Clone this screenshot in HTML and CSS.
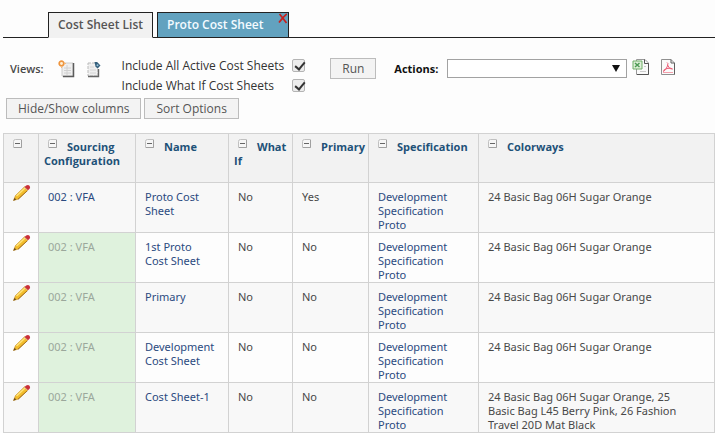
FILE: index.html
```html
<!DOCTYPE html>
<html lang="en">
<head>
<meta charset="utf-8">
<title>Cost Sheet List</title>
<link rel="stylesheet" href="styles.css">
</head>
<body>
<svg class="defs" aria-hidden="true">
  <symbol id="minus" viewBox="0 0 11 11">
    <path d="M1.500 3.500Q1.500 1.500 3.500 1.500H9.500V9.500H1.500Z" fill="#f6f6f6" stroke="#c0c0c0"/>
    <path d="M9.500 2V9.500H2" fill="none" stroke="#a0a0a0"/>
    <path d="M3 5.500H8" stroke="#666"/>
  </symbol>
  <symbol id="pencil" viewBox="0 0 19 18">
    <path d="M1.500 16.500L3.500 11.500 12.500 2.800 16 6.200 6.500 15Z" fill="#f2bd2c" stroke="#c08a28" stroke-width=".6"/>
    <path d="M4.500 12L13 4" stroke="#ffe47a" stroke-width="1.300"/>
    <path d="M6 15.200L15.500 6.500" stroke="#a8711f" stroke-width="1"/>
    <path d="M1.300 16.700L2.600 13.800 4.200 15.500Z" fill="#6d4a1c"/>
    <path d="M12.500 3L14.200 1.500Q16 .400 17.500 1.700Q18.700 3.200 17.600 4.700L16 6.300Z" fill="#c9303a"/>
    <path d="M12.300 3.200L15.800 6.600" stroke="#dfb890" stroke-width="1"/>
  </symbol>
</svg>

<nav class="tabs">
  <a class="tab active" href="#list">Cost Sheet List</a>
  <div class="tab other">
    <a href="#proto">Proto Cost Sheet</a>
    <button class="close" type="button" aria-label="Close tab">
      <svg width="10" height="11" viewBox="0 0 10 11"><path d="M1.500 1Q4.500 4.500 8.500 10M8.800 .800Q5 4 1 9.500" fill="none" stroke="#c8201c" stroke-width="1.700"/></svg>
    </button>
  </div>
</nav>

<form class="toolbar">
  <div class="views">
    <span>Views:</span>
    <button class="icon" type="button" aria-label="New view">
      <svg width="18" height="18" viewBox="0 0 18 18">
        <path d="M4 3H15V16H4Z" fill="#efefef" stroke="#ccc"/>
        <path d="M15.500 3V16.500H5" fill="none" stroke="#5c5c5c" stroke-width="1.500"/>
        <path d="M6 8H13M6 10.500H13M6 13H13M9 5V15" stroke="#d0d0d0"/>
        <circle cx="3.500" cy="3.500" r="2.300" fill="#fff1d8" stroke="#ef953e" stroke-width="1.700"/>
        <path d="M6 3.500H8M3.500 6V8" stroke="#f4b878"/>
      </svg>
    </button>
    <button class="icon" type="button" aria-label="Edit view">
      <svg width="16" height="18" viewBox="0 0 16 18">
        <path d="M2 3H12V16H2Z" fill="#efefef" stroke="#bbb" stroke-dasharray="3 1"/>
        <path d="M12.500 9V16.500H2" fill="none" stroke="#666" stroke-width="1.400"/>
        <path d="M4 7H8M4 10H10M4 13H10" stroke="#d4d4d4"/>
        <path d="M8.500 2L11 2 14.500 5.500 11.500 8.500 9.500 6.500Z" fill="#335f7c"/>
        <circle cx="11.500" cy="5.200" r="1" fill="#9cc3d8"/>
      </svg>
    </button>
  </div>
  <div class="checks">
    <label for="active">Include All Active Cost Sheets</label>
    <input id="active" type="checkbox" checked>
    <label for="whatif">Include What If Cost Sheets</label>
    <input id="whatif" type="checkbox" checked>
  </div>
  <button class="btn run" type="button">Run</button>
  <label class="actions-label" for="actions">Actions:</label>
  <div class="select">
    <select id="actions"><option></option></select>
    <svg width="8" height="7" viewBox="0 0 8 7" aria-hidden="true"><path d="M0 0H8L4 7Z" fill="#111"/></svg>
  </div>
  <div class="exports">
    <button class="icon" type="button" aria-label="Export to Excel">
      <svg width="18" height="18" viewBox="0 0 18 18">
        <path d="M4.500 1.500H13L16.500 5V16.500H4.500Z" fill="#fafafa" stroke="#999"/>
        <path d="M12.500 1.500V5.500H16.500V16.500H5" fill="none" stroke="#555"/>
        <path d="M1 3H10V11H1Z" fill="#dff0d8" stroke="#6fae68"/>
        <path d="M3 5L7.500 9M7.500 5L3 9" stroke="#4c9a54" stroke-width="1.500"/>
        <path d="M8 13.500H14M12 8.500H14" stroke="#ccc"/>
      </svg>
    </button>
    <button class="icon" type="button" aria-label="Export to PDF">
      <svg width="16" height="18" viewBox="0 0 16 18">
        <path d="M1.500 1.500H11L14.500 5V16.500H1.500Z" fill="#fbfbfb" stroke="#909090"/>
        <path d="M11 1.500V5H14.500V16.500" fill="none" stroke="#5e5e5e"/>
        <path d="M7 4.500Q8.500 4.500 7.500 8Q6 12 3.500 13.500Q3 11.500 7 10.500Q11 9.500 12.500 11Q9.500 12 7.500 7" fill="none" stroke="#ed5f78" stroke-width="1"/>
        <path d="M3 14.500H13" stroke="#f3a0ac"/>
      </svg>
    </button>
  </div>
</form>

<div class="options">
  <button class="btn" type="button">Hide/Show columns</button>
  <button class="btn" type="button">Sort Options</button>
</div>

<table class="sheets">
  <colgroup>
    <col class="c-edit"><col class="c-source"><col class="c-name"><col class="c-whatif"><col class="c-primary"><col class="c-spec"><col>
  </colgroup>
  <thead>
    <tr>
      <th><svg class="minus" role="img" aria-label="Collapse"><use href="#minus"/></svg></th>
      <th><svg class="minus"><use href="#minus"/></svg>Sourcing Configuration</th>
      <th><svg class="minus"><use href="#minus"/></svg>Name</th>
      <th><svg class="minus"><use href="#minus"/></svg>What If</th>
      <th><svg class="minus"><use href="#minus"/></svg>Primary</th>
      <th><svg class="minus"><use href="#minus"/></svg>Specification</th>
      <th><svg class="minus"><use href="#minus"/></svg>Colorways</th>
    </tr>
  </thead>
  <tbody>
    <tr>
      <td class="edit"><button class="icon" type="button" aria-label="Edit"><svg class="pencil"><use href="#pencil"/></svg></button></td>
      <td><a href="#s">002 : VFA</a></td>
      <td class="name"><a href="#n">Proto Cost Sheet</a></td>
      <td>No</td><td>Yes</td>
      <td><a href="#p">Development Specification Proto</a></td>
      <td class="colorways">24 Basic Bag 06H Sugar Orange</td>
    </tr>
    <tr>
      <td class="edit"><button class="icon" type="button" aria-label="Edit"><svg class="pencil"><use href="#pencil"/></svg></button></td>
      <td class="locked">002 : VFA</td>
      <td class="name"><a href="#n">1st Proto Cost Sheet</a></td>
      <td>No</td><td>No</td>
      <td><a href="#p">Development Specification Proto</a></td>
      <td class="colorways">24 Basic Bag 06H Sugar Orange</td>
    </tr>
    <tr>
      <td class="edit"><button class="icon" type="button" aria-label="Edit"><svg class="pencil"><use href="#pencil"/></svg></button></td>
      <td class="locked">002 : VFA</td>
      <td class="name"><a href="#n">Primary</a></td>
      <td>No</td><td>No</td>
      <td><a href="#p">Development Specification Proto</a></td>
      <td class="colorways">24 Basic Bag 06H Sugar Orange</td>
    </tr>
    <tr>
      <td class="edit"><button class="icon" type="button" aria-label="Edit"><svg class="pencil"><use href="#pencil"/></svg></button></td>
      <td class="locked">002 : VFA</td>
      <td class="name"><a href="#n">Development Cost Sheet</a></td>
      <td>No</td><td>No</td>
      <td><a href="#p">Development Specification Proto</a></td>
      <td class="colorways">24 Basic Bag 06H Sugar Orange</td>
    </tr>
    <tr>
      <td class="edit"><button class="icon" type="button" aria-label="Edit"><svg class="pencil"><use href="#pencil"/></svg></button></td>
      <td class="locked">002 : VFA</td>
      <td class="name"><a href="#n">Cost Sheet-1</a></td>
      <td>No</td><td>No</td>
      <td><a href="#p">Development Specification Proto</a></td>
      <td class="colorways">24 Basic Bag 06H Sugar Orange, 25 Basic Bag L45 Berry Pink, 26 Fashion Travel 20D Mat Black</td>
    </tr>
  </tbody>
</table>
</body>
</html>
```

FILE: styles.css
```css
* { box-sizing: border-box; }

body {
  margin: 0;
  padding: 12px 0 0 3px;
  background: #fdfdfd;
  color: #484848;
  font: 11px/14px "Open Sans", "Noto Sans", sans-serif;
}

a { color: #2b4a80; text-decoration: none; }

.defs { display: none; }

svg { display: block; }

.icon {
  display: block;
  padding: 0;
  border: 0;
  background: none;
}

.tabs {
  display: flex;
  gap: 4px;
  height: 26px;
  padding-left: 45px;
  box-shadow: inset 0 -1px #222;
}

.tab {
  display: flex;
  border: 1px solid #222;
  font-size: 12px;
  font-weight: 600;
  line-height: 23px;
}

.tab.active {
  padding: 0 9px;
  border-bottom-color: #f1f1f1;
  background: #f1f1f1;
  color: #555;
}

.tab.other {
  padding-left: 9px;
  background: #62a2bf;
}

.tab.other a { color: #f4fbff; }

.close {
  align-self: flex-start;
  margin-left: 14px;
  padding: 0;
  border: 0;
  background: none;
}

.toolbar {
  display: flex;
  align-items: flex-start;
  padding: 18px 0 0 7px;
  font-weight: 600;
}

.views {
  display: flex;
  align-items: center;
  gap: 10px;
  height: 26px;
  margin-right: 20px;
}

.views span { margin-right: 4px; }

.checks {
  display: grid;
  grid-template-columns: auto auto;
  column-gap: 8px;
  color: #333;
  font-size: 12px;
  font-weight: 500;
  line-height: 20px;
}

.checks input {
  appearance: none;
  width: 13px;
  height: 13px;
  margin: 3px 0 0;
  border: 1px solid #b4b4b4;
  border-radius: 2px;
  background: #ececec;
}

.checks input:checked::before {
  content: "";
  display: block;
  width: 4px;
  height: 8px;
  margin: 0 0 0 4px;
  border: solid #333;
  border-width: 0 2px 2px 0;
  transform: rotate(40deg);
}

.btn {
  height: 21px;
  padding: 0 11px;
  border: 1px solid #bcbcbc;
  background: #f3f3f3;
  color: #555;
  font: 12px/18px "Open Sans", "Noto Sans", sans-serif;
}

.run { margin: 2px 18px 0 25px; }

.actions-label {
  color: #111;
  font-weight: 700;
  line-height: 26px;
}

.select {
  display: grid;
  align-items: center;
  width: 180px;
  margin: 3px 5px 0 9px;
}

.select > * { grid-area: 1 / 1; }

.select select {
  appearance: none;
  width: 100%;
  height: 19px;
  border: 1px solid #a2a2a2;
  border-radius: 0;
  background: #fff;
}

.select svg {
  justify-self: end;
  margin-right: 7px;
  pointer-events: none;
}

.exports {
  display: flex;
  gap: 10px;
  margin-top: 2px;
}

.options {
  display: flex;
  gap: 3px;
  padding: 2px 0 14px 3px;
}

.sheets {
  width: 100%;
  border-collapse: collapse;
  table-layout: fixed;
}

.c-edit { width: 35px; }
.c-source { width: 97px; }
.c-name { width: 93px; }
.c-whatif { width: 64px; }
.c-primary { width: 76px; }
.c-spec { width: 110px; }

.sheets th,
.sheets td {
  padding: 7px 8px 0 9px;
  border: 1px solid #d2d2d2;
  text-align: left;
  vertical-align: top;
}

.sheets td {
  height: 50px;
  font-family: "Noto Sans", "Open Sans", sans-serif;
}

.sheets th {
  height: 49px;
  padding: 6px 0 0 5px;
  background: #f2f2f2;
  color: #1e5178;
  font-weight: 700;
}

.sheets tbody tr { background: #fdfdfd; }
.sheets tbody tr:nth-child(odd) { background: #f8f8f8; }

.sheets td.edit { padding: 1px 0 0 8px; }

.sheets td.name { padding-right: 12px; }

.sheets td.colorways { padding-right: 24px; }

.sheets td.locked {
  background: #dff2dd;
  color: #9ba79b;
}

.minus {
  display: inline-block;
  width: 11px;
  height: 11px;
  margin: -2px 9px 0 3px;
  vertical-align: 2px;
}

.pencil { width: 19px; height: 18px; }
```
